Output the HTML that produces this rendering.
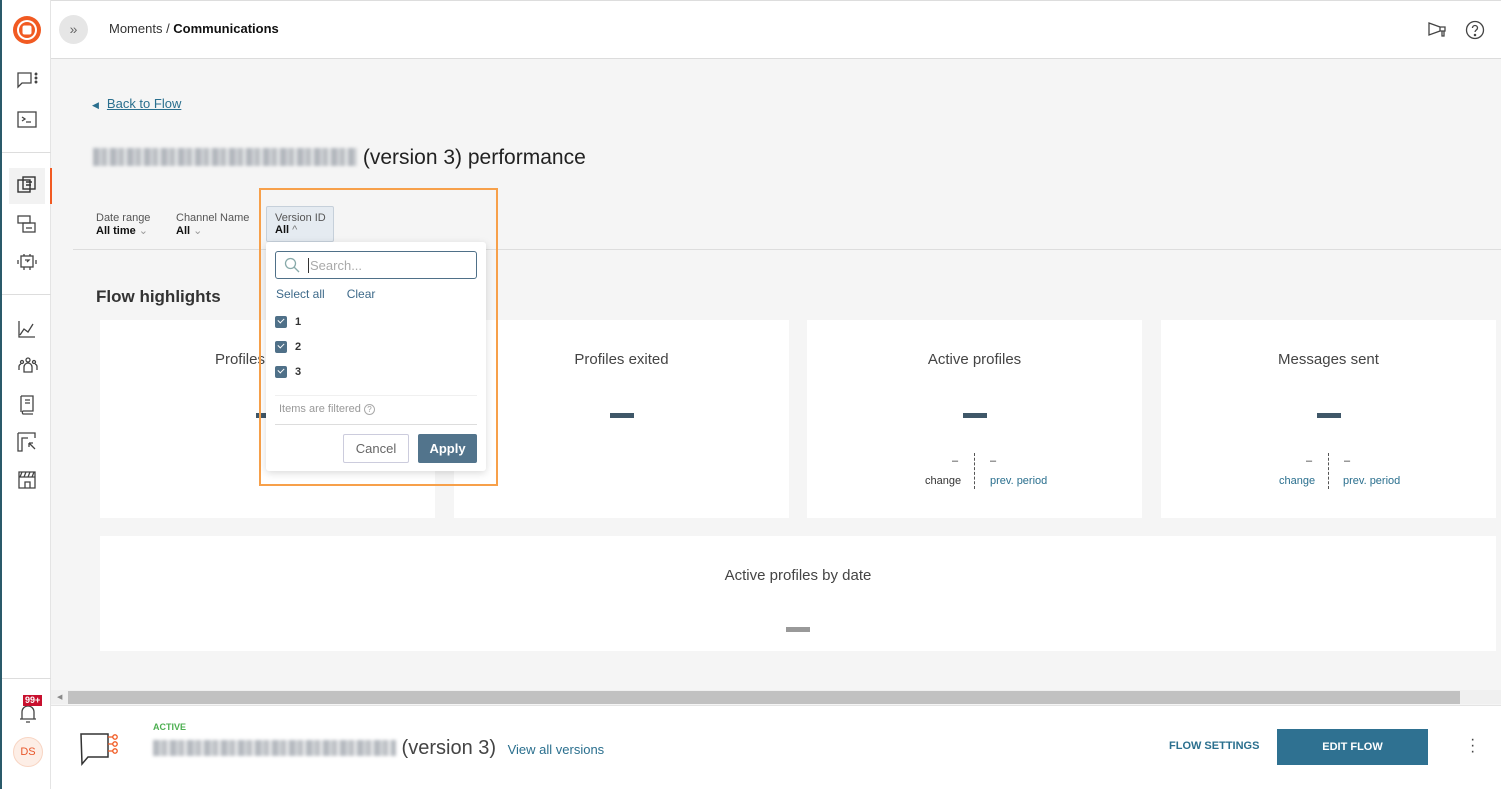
<!DOCTYPE html>
<html><head><meta charset="utf-8"><style>
*{box-sizing:border-box;margin:0;padding:0}
body{width:1501px;height:789px;overflow:hidden;font-family:"Liberation Sans",Arial,sans-serif;background:#f5f5f5;position:relative;color:#333}
.abs{position:absolute}
.side{left:0;top:0;width:51px;height:789px;background:#fff;border-left:2px solid #2a5a6a;border-right:1px solid #e4e4e4}
.top{left:51px;top:0;width:1450px;height:59px;background:#fff;border-bottom:1px solid #dcdcdc;border-top:1px solid #ddd}
.ic{position:absolute;left:15px}
.card{position:absolute;background:#fff;top:320px;height:198px}
.ct{position:absolute;top:31px;width:100%;text-align:center;font-size:15px;color:#444}
.dash{position:absolute;top:93px;width:24px;height:5px;background:#3f5768;left:50%;margin-left:-12px}
.blur{display:inline-block;background:repeating-linear-gradient(90deg,#9ca2aa 0 6px,#c4c8cc 6px 9px,#a8adb3 9px 14px,#e2e4e6 14px 17px);filter:blur(1.5px);opacity:.75}
.sub{position:absolute;top:135px;font-size:11px}
.cb{display:inline-block;width:12px;height:12px;background:#4f7088;border-radius:2px;vertical-align:middle;margin-right:8px;position:relative}
.cb:after{content:"";position:absolute;left:3px;top:2px;width:5px;height:3px;border-left:1.5px solid #fff;border-bottom:1.5px solid #fff;transform:rotate(-45deg)}
</style></head><body>
<div class="abs side">
 <svg class="abs" style="left:10px;top:15px" width="30" height="30" viewBox="0 0 30 30"><circle cx="15" cy="15" r="14" fill="#f15a22"/><circle cx="15" cy="15" r="10" fill="#fff"/><circle cx="15" cy="15" r="8" fill="#f15a22"/><rect x="10.5" y="10.5" width="9" height="9" rx="2" fill="#fff"/></svg>
 <svg class="ic" style="top:71px" width="22" height="20" viewBox="0 0 22 20" fill="none" stroke="#444" stroke-width="1.3"><path d="M1 2h13v10H5l-4 4z"/><circle cx="19" cy="3" r=".8" fill="#444"/><circle cx="19" cy="7" r=".8" fill="#444"/><circle cx="19" cy="11" r=".8" fill="#444"/></svg>
 <svg class="ic" style="top:111px" width="20" height="18" viewBox="0 0 20 18" fill="none" stroke="#444" stroke-width="1.3"><rect x="1" y="1" width="18" height="15"/><path d="M5 6l3 2-3 2M9 11h5"/></svg>
 <div class="abs" style="left:0;top:152px;width:49px;border-top:1px solid #ddd"></div>
 <div class="abs" style="left:7px;top:168px;width:36px;height:36px;background:#f2f2f2"></div>
 <div class="abs" style="left:48px;top:168px;width:2px;height:36px;background:#f15a22"></div>
 <svg class="ic" style="top:176px" width="20" height="20" viewBox="0 0 20 20" fill="none" stroke="#333" stroke-width="1.4"><rect x="1" y="4" width="12" height="12"/><rect x="6" y="1" width="12" height="12"/><path d="M9 6h6M9 9h5"/></svg>
 <svg class="ic" style="top:214px" width="20" height="20" viewBox="0 0 20 20" fill="none" stroke="#444" stroke-width="1.3"><rect x="1" y="2" width="12" height="7"/><rect x="6" y="9" width="12" height="9"/><path d="M9 14h6"/></svg>
 <svg class="ic" style="top:252px" width="20" height="20" viewBox="0 0 20 20" fill="none" stroke="#444" stroke-width="1.3"><rect x="4" y="4" width="12" height="11"/><path d="M7 2v2M13 2v2M1 8v4M19 8v4M7 15v3M13 15v3M8 8h4l-2 2"/></svg>
 <div class="abs" style="left:0;top:294px;width:49px;border-top:1px solid #ddd"></div>
 <svg class="ic" style="top:319px" width="20" height="20" viewBox="0 0 20 20" fill="none" stroke="#444" stroke-width="1.3"><path d="M2 2v16h16M3 16l4-6 4 3 5-8"/></svg>
 <svg class="ic" style="top:356px" width="22" height="20" viewBox="0 0 22 20" fill="none" stroke="#444" stroke-width="1.3"><circle cx="11" cy="4" r="2"/><path d="M7 16v-5a4 4 0 018 0v5z"/><circle cx="5" cy="6" r="1.5"/><circle cx="17" cy="6" r="1.5"/><path d="M2 14v-3a3 3 0 012-3M20 14v-3a3 3 0 00-2-3"/></svg>
 <svg class="ic" style="top:395px" width="20" height="20" viewBox="0 0 20 20" fill="none" stroke="#444" stroke-width="1.3"><path d="M4 1h12v15H6a2 2 0 000 3h10M4 1v16M8 5h5M8 8h5"/></svg>
 <svg class="ic" style="top:432px" width="20" height="20" viewBox="0 0 20 20" fill="none" stroke="#444" stroke-width="1.3"><path d="M1 1h17v5M1 1v18h4V6h6M12 11l6 6M12 11v4M12 11h4"/></svg>
 <svg class="ic" style="top:470px" width="20" height="20" viewBox="0 0 20 20" fill="none" stroke="#444" stroke-width="1.3"><path d="M2 2h16v16H2zM2 7h16M5 2l-2 5M9 2l-2 5M13 2l-2 5M17 2l-2 5M8 18v-6h5v6"/></svg>
 <div class="abs" style="left:0;top:678px;width:49px;border-top:1px solid #ddd"></div>
 <svg class="ic" style="top:704px;left:16px" width="20" height="20" viewBox="0 0 20 20" fill="none" stroke="#444" stroke-width="1.3"><path d="M4 15V8a6 6 0 0112 0v7zM2 15h16M8 18h4"/></svg>
 <div class="abs" style="left:21px;top:695px;background:#c8102e;color:#fff;font-size:9px;font-weight:bold;padding:0 2px;line-height:11px">99+</div>
 <div class="abs" style="left:11px;top:737px;width:30px;height:30px;border-radius:50%;background:#fdeee6;border:1px solid #f8d5c3;color:#e8562a;font-size:11px;text-align:center;line-height:28px">DS</div>
</div>
<div class="abs top">
 <div class="abs" style="left:8px;top:14px;width:29px;height:29px;border-radius:50%;background:#e6e6e6;color:#666;text-align:center;line-height:28px;font-size:14px">»</div>
 <div class="abs" style="left:58px;top:20px;font-size:13px;color:#333">Moments / <span style="color:#111;font-weight:bold">Communications</span></div>
 <svg class="abs" style="left:1377px;top:20px" width="20" height="18" viewBox="0 0 20 18" fill="none" stroke="#444" stroke-width="1.3"><path d="M1 2l11 4v4L1 14zM12 6h5v4h-5M14 10v5h2v-5"/></svg>
 <svg class="abs" style="left:1414px;top:19px" width="20" height="20" viewBox="0 0 20 20" fill="none" stroke="#444" stroke-width="1.3"><circle cx="10" cy="10" r="8.5"/><path d="M7.5 8a2.5 2.5 0 115 0c0 2-2.5 2-2.5 4"/><circle cx="10" cy="15" r=".6" fill="#444"/></svg>
</div>
<div class="abs" style="left:92px;top:96px;font-size:13px;color:#2a6f8e"><span style="font-size:9px;margin-right:8px">◀</span><u>Back to Flow</u></div>
<div class="abs" style="left:93px;top:146px;font-size:21px;color:#222"><span class="blur" style="width:264px;height:18px;vertical-align:-2px"></span> (version 3) performance</div>
<div class="abs" style="left:73px;top:249px;width:1428px;border-top:1px solid #ddd"></div>
<div class="abs" style="left:96px;top:212px;font-size:11px;color:#555">Date range<br><b style="color:#111;font-weight:600">All time</b> <span style="color:#999">⌄</span></div>
<div class="abs" style="left:176px;top:212px;font-size:11px;color:#555">Channel Name<br><b style="color:#111;font-weight:600">All</b> <span style="color:#999">⌄</span></div>
<div class="abs" style="left:266px;top:206px;width:68px;height:36px;background:#e5ebf1;border:1px solid #c6d0da;border-radius:2px;padding:5px 0 0 8px;font-size:11px;color:#555">Version ID<br><b style="color:#111;font-weight:600">All</b> <span style="color:#777">^</span></div>
<div class="abs" style="left:96px;top:287px;font-size:17px;font-weight:bold;color:#333">Flow highlights</div>
<div class="card" style="left:100px;width:335px"><div class="ct">Profiles entered</div><div class="dash"></div></div>
<div class="card" style="left:454px;width:335px"><div class="ct">Profiles exited</div><div class="dash"></div></div>
<div class="card" style="left:807px;width:335px"><div class="ct">Active profiles</div><div class="dash"></div>
 <div class="sub" style="left:145px;color:#333">–</div><div class="sub" style="left:118px;top:155px;color:#333">change</div>
 <div class="abs" style="left:167px;top:133px;height:36px;border-left:1px dashed #555"></div>
 <div class="sub" style="left:183px">–</div><div class="sub" style="left:183px;top:155px;color:#2a6f8e">prev. period</div></div>
<div class="card" style="left:1161px;width:335px"><div class="ct">Messages sent</div><div class="dash"></div>
 <div class="sub" style="left:145px">–</div><div class="sub" style="left:118px;top:155px;color:#2a6f8e">change</div>
 <div class="abs" style="left:167px;top:133px;height:36px;border-left:1px dashed #555"></div>
 <div class="sub" style="left:183px">–</div><div class="sub" style="left:182px;top:155px;color:#2a6f8e">prev. period</div></div>
<div class="card" style="left:100px;top:536px;width:1396px;height:115px"><div class="ct" style="top:31px">Active profiles by date</div><div class="abs" style="left:686px;top:91px;width:24px;height:5px;background:#999"></div></div>
<div class="abs" style="left:259px;top:188px;width:239px;height:298px;border:2px solid #f7a04a"></div>
<div class="abs" style="left:266px;top:242px;width:220px;height:229px;background:#fff;border-radius:3px;box-shadow:0 2px 8px rgba(0,0,0,.15)">
 <div class="abs" style="left:9px;top:9px;width:202px;height:28px;border:1px solid #4f7088;border-radius:3px">
  <svg class="abs" style="left:8px;top:5px" width="16" height="16" viewBox="0 0 16 16" fill="none" stroke="#8aa" stroke-width="1.3"><circle cx="6.5" cy="6.5" r="5"/><path d="M10 10l5 5"/></svg>
  <div class="abs" style="left:32px;top:6px;border-left:1px solid #333;height:15px;padding-left:1px;font-size:13px;color:#aaa;line-height:15px">Search...</div></div>
 <div class="abs" style="left:10px;top:45px;font-size:12px;color:#3e6a8a">Select all<span style="margin-left:22px">Clear</span></div>
 <div class="abs" style="left:9px;top:68px;font-size:11px;font-weight:bold;color:#333;line-height:25px"><div><span class="cb"></span>1</div><div><span class="cb"></span>2</div><div><span class="cb"></span>3</div></div>
 <div class="abs" style="left:9px;top:153px;width:202px;border-top:1px solid #f0f0f0"></div>
 <div class="abs" style="left:13px;top:161px;font-size:11px;color:#999">Items are filtered <span style="display:inline-block;width:11px;height:11px;border:1px solid #aaa;border-radius:50%;font-size:8px;text-align:center;line-height:10px">?</span></div>
 <div class="abs" style="left:9px;top:182px;width:202px;border-top:1px solid #ddd"></div>
 <div class="abs" style="left:77px;top:192px;width:66px;height:29px;border:1px solid #ccd;border-radius:2px;font-size:13px;color:#666;text-align:center;line-height:27px">Cancel</div>
 <div class="abs" style="left:152px;top:192px;width:59px;height:29px;background:#52748c;border-radius:2px;font-size:13px;font-weight:bold;color:#fff;text-align:center;line-height:29px">Apply</div>
</div>
<div class="abs" style="left:51px;top:690px;width:1450px;height:14px;background:#f0f0f0"></div>
<div class="abs" style="left:57px;top:693px;font-size:7px;color:#888">◀</div>
<div class="abs" style="left:68px;top:691px;width:1392px;height:13px;background:#c1c1c1"></div>
<div class="abs" style="left:51px;top:705px;width:1450px;height:84px;background:#fff;border-top:1px solid #e4e4e4"></div>
<svg class="abs" style="left:79px;top:731px" width="44" height="36" viewBox="0 0 44 36" fill="none"><path d="M2 3h27v23H9l-6 7z" stroke="#333" stroke-width="1.5"/><path d="M29 6h5M29 13h5M29 20h5" stroke="#f15a22" stroke-width="1.3"/><circle cx="36" cy="6" r="2.2" stroke="#f15a22" stroke-width="1.3"/><circle cx="36" cy="13" r="2.2" stroke="#f15a22" stroke-width="1.3"/><circle cx="36" cy="20" r="2.2" stroke="#f15a22" stroke-width="1.3"/></svg>
<div class="abs" style="left:153px;top:722px;font-size:9px;font-weight:bold;color:#4caf50">ACTIVE</div>
<div class="abs" style="left:153px;top:737px;font-size:20px;color:#444"><span class="blur" style="width:243px;height:16px;vertical-align:-2px"></span> (version 3) <span style="font-size:13px;color:#2a6f8e;margin-left:6px">View all versions</span></div>
<div class="abs" style="left:1169px;top:740px;font-size:11px;font-weight:bold;color:#2a6f8e">FLOW SETTINGS</div>
<div class="abs" style="left:1277px;top:729px;width:151px;height:36px;background:#2f7191;color:#fff;font-size:11px;font-weight:bold;text-align:center;line-height:36px">EDIT FLOW</div>
<div class="abs" style="left:1470px;top:737px;font-size:16px;color:#444;line-height:6px">·<br>·<br>·</div>
</body></html>
